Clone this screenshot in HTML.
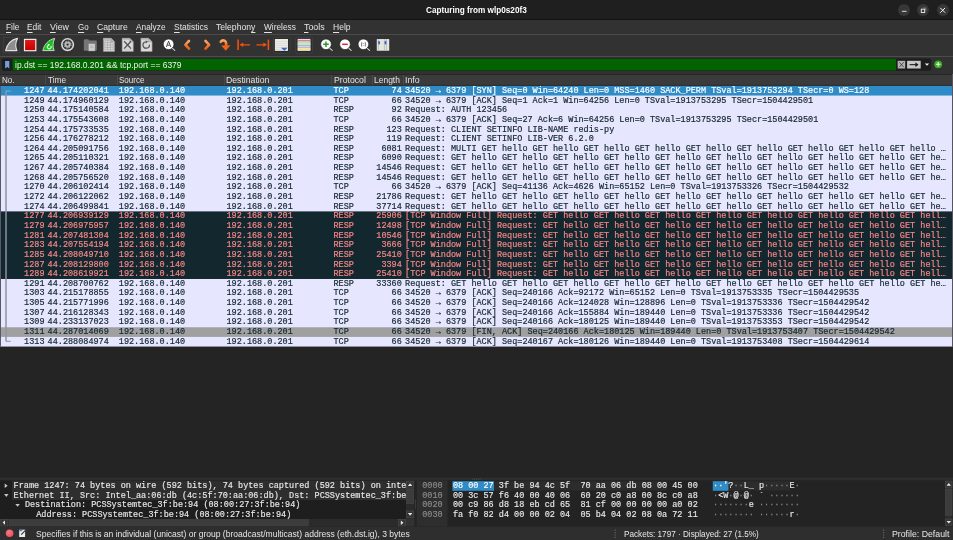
<!DOCTYPE html>
<html><head><meta charset="utf-8"><title>Capturing from wlp0s20f3</title>
<style>
html,body{margin:0;padding:0;}
body{width:953px;height:540px;overflow:hidden;position:relative;background:#313131;font-family:"Liberation Sans",sans-serif;color:#e6e6e6;}
.abs{position:absolute;}
.s{position:absolute;white-space:nowrap;line-height:11px;transform-origin:0 50%;display:block;}
.s u{text-decoration:underline;text-decoration-thickness:0.9px;text-underline-offset:1.5px;}
#title{left:0;top:0;width:953px;height:20px;background:#1f1f1f;border-bottom:1px solid #141414;box-sizing:border-box;}
.wb{position:absolute;top:4.1px;width:12.2px;height:12.2px;border-radius:50%;background:#373737;}
#menu{left:0;top:20px;width:953px;height:14.5px;background:#323232;border-bottom:1px solid #4a4a4a;box-sizing:border-box;}
#tool{left:0;top:34.5px;width:953px;height:22.5px;background:#323232;border-bottom:1px solid #4c4c4c;box-sizing:border-box;}
#filt{left:0;top:57px;width:953px;height:16.5px;background:#313131;}
#filt .fr{position:absolute;left:1.8px;top:1.6px;width:929.4px;height:12px;background:#1d1d1d;border-radius:2px;}
#filt .g{position:absolute;left:12.6px;top:1.8px;width:883.4px;height:11.6px;background:#016401;}
#hdr{left:0;top:73.6px;width:952px;height:12px;background:#3b3b3b;border-top:1px solid #262626;box-sizing:border-box;}
#hdr i{position:absolute;top:0.5px;width:1px;height:10.5px;background:#4a4a4a;}
#list{left:0;top:85.5px;width:953px;height:261px;background:#e7e6ff;}
.r{position:absolute;left:1px;width:951px;height:10px;color:#12272e;font-family:"Liberation Mono",monospace;font-size:8.5px;line-height:10px;white-space:pre;-webkit-text-stroke:0.18px currentColor;}
.r.sel{color:#fff;}
.r.bad{color:#f78787;}
.r.fin{color:#12272e;}
.c{position:absolute;top:0;}
.no{left:0;width:43.5px;text-align:right;}
.tm{left:46.6px;}
.sr{left:117.8px;}
.ds{left:225.5px;}
.pr{left:332.5px;}
.ln{left:340px;width:60.8px;text-align:right;}
.in{left:404.1px;}
#gap{left:0;top:346px;width:953px;height:181px;background:#242424;}
#bot{left:0;top:0;width:953px;height:540px;}
.m{font-family:"Liberation Mono",monospace;font-size:8.5px;line-height:10px;height:10px;white-space:pre;color:#e8e8e8;position:absolute;-webkit-text-stroke:0.15px currentColor;}
.dim{color:#8c8c8c;}
#stat{left:0;top:526.6px;width:953px;height:13.4px;background:#2f2f2f;}
</style></head><body><div id="root" style="position:absolute;left:0;top:0;width:953px;height:540px;will-change:transform;">
<div id="title" class="abs">
<div class="wb" style="left:898.1px"></div><div class="wb" style="left:917.3px"></div><div class="wb" style="left:936.6px"></div>
<svg class="abs" style="left:890px;top:0" width="63" height="20" viewBox="890 0 63 20">
<path d="M901.9 11.3 H906.5" stroke="#f0f0f0" stroke-width="0.9"/>
<rect x="921.3" y="9.2" width="3.4" height="3.3" fill="none" stroke="#f0f0f0" stroke-width="0.9"/>
<path d="M922.8 8 H925.9 V11" fill="none" stroke="#9a9a9a" stroke-width="0.6"/>
<path d="M940.3 7.9 L945.1 12.7 M945.1 7.9 L940.3 12.7" stroke="#f4f4f4" stroke-width="1"/>
</svg>
</div>
<span class="s" style="left:426px;top:4.6px;font-size:9.0px;transform:scaleX(0.9120);font-weight:bold;color:#ffffff;">Capturing from wlp0s20f3</span>
<div id="menu" class="abs"></div>
<span class="s" style="left:5.5px;top:22.3px;font-size:9.0px;transform:scaleX(0.9231);color:#e4e4e4;"><u>F</u>ile</span>
<span class="s" style="left:27.2px;top:22.3px;font-size:9.0px;transform:scaleX(0.9281);color:#e4e4e4;"><u>E</u>dit</span>
<span class="s" style="left:50.4px;top:22.3px;font-size:9.0px;transform:scaleX(0.9763);color:#e4e4e4;"><u>V</u>iew</span>
<span class="s" style="left:77.6px;top:22.3px;font-size:9.0px;transform:scaleX(0.8822);color:#e4e4e4;"><u>G</u>o</span>
<span class="s" style="left:96.5px;top:22.3px;font-size:9.0px;transform:scaleX(0.9584);color:#e4e4e4;"><u>C</u>apture</span>
<span class="s" style="left:135.5px;top:22.3px;font-size:9.0px;transform:scaleX(0.9210);color:#e4e4e4;"><u>A</u>nalyze</span>
<span class="s" style="left:173.8px;top:22.3px;font-size:9.0px;transform:scaleX(0.9440);color:#e4e4e4;"><u>S</u>tatistics</span>
<span class="s" style="left:216.4px;top:22.3px;font-size:9.0px;transform:scaleX(0.9599);color:#e4e4e4;">Telephon<u>y</u></span>
<span class="s" style="left:263.9px;top:22.3px;font-size:9.0px;transform:scaleX(0.9213);color:#e4e4e4;"><u>W</u>ireless</span>
<span class="s" style="left:303.7px;top:22.3px;font-size:9.0px;transform:scaleX(0.9850);color:#e4e4e4;"><u>T</u>ools</span>
<span class="s" style="left:332.5px;top:22.3px;font-size:9.0px;transform:scaleX(0.9505);color:#e4e4e4;"><u>H</u>elp</span>
<div id="tool" class="abs"></div>
<svg class="abs" style="left:0;top:34px" width="953" height="23" viewBox="0 34 953 23">
<defs>
<linearGradient id="og" x1="0" y1="0" x2="0" y2="1"><stop offset="0" stop-color="#f8a868"/><stop offset="1" stop-color="#ee5a10"/></linearGradient>
<linearGradient id="rg" x1="0" y1="0" x2="0" y2="1"><stop offset="0" stop-color="#e81818"/><stop offset="1" stop-color="#c20000"/></linearGradient>
</defs>
<!-- 1 start (disabled) -->
<rect x="3.3" y="37.3" width="16.2" height="15.6" fill="#313131" stroke="#464646" stroke-width="0.6"/>
<path d="M5.6 50.6 C7 44.6 11 39.8 17.5 38.4 C15.4 42.4 15.4 47 17 50.6 Z" fill="#8e8e8e" stroke="#e2e2e2" stroke-width="1.1" stroke-linejoin="round"/>
<!-- 2 stop -->
<rect x="24.5" y="39.4" width="11.3" height="11.3" fill="url(#rg)" stroke="#ececec" stroke-width="1.2"/>
<!-- 3 restart -->
<path d="M42.8 50.6 C44.2 44.6 48.2 39.8 54.7 38.4 C52.6 42.4 52.6 47 54.2 50.6 Z" fill="#12c412" stroke="#dcdcdc" stroke-width="0.9" stroke-linejoin="round"/>
<path d="M51 45.9 A2 2 0 1 1 47.6 45.6" fill="none" stroke="#f4fff4" stroke-width="1.1"/>
<path d="M47.6 43.8 L50.2 44.6 L48.2 46.6 Z" fill="#fff"/>
<!-- 4 options -->
<circle cx="67.6" cy="44.6" r="5.8" fill="none" stroke="#d8d8d8" stroke-width="1.6"/>
<circle cx="67.6" cy="44.6" r="3.55" fill="none" stroke="#b4b4b4" stroke-width="1" stroke-dasharray="1.5 1.29"/>
<circle cx="67.6" cy="44.6" r="2.15" fill="none" stroke="#b8b8b8" stroke-width="2"/>
<!-- 5 open (folder) -->
<path d="M83.8 40.2 q0 -1 1 -1 h3.4 l1 1.2 h6.6 q1 0 1 1 v8.4 q0 1 -1 1 h-11 q-1 0 -1 -1 Z" fill="#767676"/>
<rect x="88.6" y="43.8" width="6.4" height="7.2" fill="#cfcfcf" stroke="#8a8a8a" stroke-width="0.4"/>
<path d="M90 46 h3.4 M90 47.6 h3.4" stroke="#9a9a9a" stroke-width="0.5"/>
<!-- 6 save -->
<path d="M103.4 38.2 h7.6 l3.6 3.6 v9.7 h-11.2 Z" fill="#dadada" stroke="#909090" stroke-width="0.55"/><path d="M103.4 38.2 h7.6 l1.8 1.8 h-9.4 Z" fill="#b4b4b4" opacity="0.7"/>
<path d="M111 38.2 v3.6 h3.6" fill="#b8b8b8" stroke="#8a8a8a" stroke-width="0.4"/>
<path d="M104.8 42.6 h8.4 M104.8 45 h8.4 M104.8 47.4 h8.4 M104.8 49.8 h8.4 M104.8 40.4 v9.4 M107.6 40.4 v9.4 M110.4 40.4 v9.4 M113.2 42.6 v7.2 M104.8 40.4 h5.6" stroke="#9a9a9a" stroke-width="0.55" fill="none"/>
<!-- 7 close -->
<path d="M122.1 38.2 h7.6 l3.6 3.6 v9.7 h-11.2 Z" fill="#dadada" stroke="#909090" stroke-width="0.55"/><path d="M122.1 38.2 h7.6 l1.8 1.8 h-9.4 Z" fill="#b4b4b4" opacity="0.7"/>
<path d="M129.7 38.2 v3.6 h3.6" fill="#b8b8b8" stroke="#8a8a8a" stroke-width="0.4"/>
<path d="M124.2 41.2 L131 48.6 M131 41.2 L124.2 48.6" stroke="#555" stroke-width="1.4"/><path d="M124 49.9 h7.4" stroke="#b0b0b0" stroke-width="0.5"/>
<!-- 8 reload -->
<path d="M140.9 38.2 h7.6 l3.6 3.6 v9.7 h-11.2 Z" fill="#dadada" stroke="#909090" stroke-width="0.55"/><path d="M140.9 38.2 h7.6 l1.8 1.8 h-9.4 Z" fill="#b4b4b4" opacity="0.7"/>
<path d="M148.5 38.2 v3.6 h3.6" fill="#b8b8b8" stroke="#8a8a8a" stroke-width="0.4"/>
<path d="M149.4 44.6 A3.2 3.2 0 1 1 145.8 41.85" fill="none" stroke="#5c5c5c" stroke-width="1.3"/>
<path d="M145.6 40.2 L148.3 41.7 L145.8 43.4 Z" fill="#5c5c5c"/>
<!-- 9 find -->
<path d="M171.6 47.6 L174.8 50.4" stroke="#d0d0d0" stroke-width="1.1" stroke-linecap="round"/>
<circle cx="168.6" cy="44.3" r="5.3" fill="#fff" stroke="#1c1c1c" stroke-width="0.6"/>
<path d="M166.4 47 L168.6 41.2 L170.8 47 M167.2 45.2 H170" fill="none" stroke="#3a3a3a" stroke-width="0.9"/>
<!-- 10 back -->
<path d="M189 40.9 L185.4 44.8 L189 48.7" fill="none" stroke="url(#og)" stroke-width="2.6" stroke-linecap="round" stroke-linejoin="round"/>
<!-- 11 fwd -->
<path d="M205.5 40.9 L209.1 44.8 L205.5 48.7" fill="none" stroke="url(#og)" stroke-width="2.6" stroke-linecap="round" stroke-linejoin="round"/>
<!-- 12 goto -->
<path d="M220.8 41.8 C222.6 39.4 227 39.6 226 46.2" fill="none" stroke="url(#og)" stroke-width="2.7" stroke-linecap="round"/>
<path d="M221.2 45.6 L230.4 45.2 L225.8 50.8 Z" fill="#f0621a"/>
<!-- 13 first -->
<path d="M238.1 39.6 V50" stroke="#f2500e" stroke-width="1.6"/>
<path d="M239.4 44.8 L243.2 42.6 V44.2 H250 V45.4 H243.2 V47 Z" fill="#f2500e"/>
<!-- 14 last -->
<path d="M268.4 39.6 V50" stroke="#f2500e" stroke-width="1.6"/>
<path d="M267.1 44.8 L263.3 42.6 V44.2 H256.4 V45.4 H263.3 V47 Z" fill="#f2500e"/>
<!-- 15 autoscroll (checked) -->
<rect x="273.2" y="37.3" width="16.8" height="15.8" rx="1.2" fill="#2b2b2b" stroke="#484848" stroke-width="0.7"/>
<rect x="274.9" y="39" width="13.1" height="11.9" fill="#ecece8"/>
<path d="M274.9 41.4 h13.1 M274.9 43.4 h13.1 M274.9 45.4 h13.1 M274.9 47.4 h13.1 M274.9 49.4 h13.1" stroke="#c8c8c4" stroke-width="0.45"/>
<path d="M281 47.7 H287.6 L284.3 50.7 Z" fill="#2d66c8"/>
<!-- 16 colorize (checked) -->
<rect x="295.8" y="37.3" width="16.6" height="15.8" rx="1.2" fill="#2b2b2b" stroke="#484848" stroke-width="0.7"/>
<rect x="297.7" y="38.9" width="12.7" height="11.9" fill="#f4f4f4"/>
<rect x="297.7" y="39.8" width="12.7" height="1.1" fill="#ee6a6a"/>
<rect x="297.7" y="41.5" width="12.7" height="0.9" fill="#7a9ee0"/>
<rect x="297.7" y="42.9" width="12.7" height="2" fill="#c4ec9a"/>
<rect x="297.7" y="45.3" width="12.7" height="0.8" fill="#7a9ee0"/>
<rect x="297.7" y="46.7" width="12.7" height="1" fill="#b09acc"/>
<rect x="297.7" y="48.2" width="12.7" height="2.2" fill="#f0e29a"/>
<!-- 17 zoom in -->
<path d="M329 47.6 L332.2 50.4" stroke="#d0d0d0" stroke-width="1.1" stroke-linecap="round"/>
<circle cx="326" cy="44.3" r="5.3" fill="#fff" stroke="#1c1c1c" stroke-width="0.6"/>
<path d="M323.2 44.3 H328.8 M326 41.5 V47.1" stroke="#2a9a2a" stroke-width="1.5"/>
<!-- 18 zoom out -->
<path d="M348 47.6 L351.2 50.4" stroke="#d0d0d0" stroke-width="1.1" stroke-linecap="round"/>
<circle cx="345" cy="44.3" r="5.3" fill="#fff" stroke="#1c1c1c" stroke-width="0.6"/>
<path d="M342.2 44.3 H347.8" stroke="#d02848" stroke-width="1.5"/>
<!-- 19 zoom 1:1 -->
<path d="M366.4 47.6 L369.6 50.4" stroke="#d0d0d0" stroke-width="1.1" stroke-linecap="round"/>
<circle cx="363.4" cy="44.3" r="5.3" fill="#fff" stroke="#1c1c1c" stroke-width="0.6"/>
<path d="M361.6 42.2 V46.6 M365.4 42.2 V46.6" stroke="#8c8c8c" stroke-width="1.2"/>
<path d="M363.5 43.2 V43.9 M363.5 44.9 V45.6" stroke="#8c8c8c" stroke-width="0.8"/>
<!-- 20 resize columns -->
<rect x="376.8" y="39.1" width="12.4" height="11.6" fill="#f0f0ea"/>
<path d="M376.8 41 h12.4 M376.8 43 h12.4 M376.8 45 h12.4 M376.8 47 h12.4 M376.8 49 h12.4" stroke="#c4c4be" stroke-width="0.5"/>
<path d="M378.3 39.1 v11.6 M384.4 39.1 v11.6 M386.4 39.1 v11.6" stroke="#a8a8a2" stroke-width="0.6"/>
<path d="M378.3 40.8 a1.9 1.9 0 0 1 0 3.8 Z M386.3 40.8 a1.9 1.9 0 0 0 0 3.8 Z" fill="#2d66c8"/>
</svg>

<div id="filt" class="abs">
<svg class="abs" style="left:0;top:0" width="953" height="17" viewBox="0 57 953 17">
<rect x="1.8" y="58.6" width="929.4" height="12.1" rx="1.6" fill="#1d1d1d"/><rect x="12.6" y="58.9" width="883.4" height="11.5" fill="#016401"/>
<path d="M5.1 61 H9.3 V68.6 L7.2 66.9 L5.1 68.6 Z" fill="#6f9fdc"/>
<rect x="897.7" y="60.8" width="7.5" height="7.7" fill="#b4b4b4"/>
<path d="M899.2 62.2 L903.8 67.2 M903.8 62.2 L899.2 67.2" stroke="#2a2a2a" stroke-width="0.7"/>
<rect x="907.1" y="60.8" width="13.6" height="7.7" fill="#c9c9c9"/>
<path d="M909.6 64.65 H916.2" stroke="#1e1e1e" stroke-width="1.1"/>
<path d="M915.4 62.2 L918.6 64.65 L915.4 67.1 Z" fill="#1e1e1e"/>
<path d="M924.8 63.6 H929.2 L927 65.8 Z" fill="#f0f0f0"/>
<circle cx="938.2" cy="64.3" r="3.9" fill="#3aae22"/>
<path d="M935.9 64.3 H940.5 M938.2 62 V66.6" stroke="#f4fff0" stroke-width="1.1"/>
</svg>
</div>
<span class="s" style="left:14.9px;top:60.0px;font-size:9.0px;transform:scaleX(0.9399);color:#eef4e6;">ip.dst == 192.168.0.201 &amp;&amp; tcp.port == 6379</span>
<div id="hdr" class="abs"><i style="left:44.7px"></i><i style="left:116.6px"></i><i style="left:223.7px"></i><i style="left:331px"></i><i style="left:372px"></i><i style="left:402.8px"></i></div>
<span class="s" style="left:1.9px;top:74.6px;font-size:9.0px;transform:scaleX(0.8990);color:#e2e2e2;">No.</span>
<span class="s" style="left:47.6px;top:74.6px;font-size:9.0px;transform:scaleX(0.9201);color:#e2e2e2;">Time</span>
<span class="s" style="left:118.9px;top:74.6px;font-size:9.0px;transform:scaleX(0.8938);color:#e2e2e2;">Source</span>
<span class="s" style="left:226.2px;top:74.6px;font-size:9.0px;transform:scaleX(0.9638);color:#e2e2e2;">Destination</span>
<span class="s" style="left:333.5px;top:74.6px;font-size:9.0px;transform:scaleX(0.9658);color:#e2e2e2;">Protocol</span>
<span class="s" style="left:374.1px;top:74.6px;font-size:9.0px;transform:scaleX(0.9407);color:#e2e2e2;">Length</span>
<span class="s" style="left:404.7px;top:74.6px;font-size:9.0px;transform:scaleX(0.9790);color:#e2e2e2;">Info</span>
<div id="gap" class="abs"></div>
<svg class="abs" style="left:0;top:80px" width="953" height="270" viewBox="0 80 953 270"><rect x="0" y="85.90" width="953" height="260.66" fill="#e7e6ff"/><rect x="0" y="84.90" width="952" height="1" fill="#2a2524"/><rect x="1" y="85.90" width="951" height="9.65" fill="#308cc6"/><rect x="1" y="211.40" width="951" height="67.58" fill="#12272e"/><rect x="1" y="327.25" width="951" height="9.65" fill="#a0a0a0"/><rect x="0" y="85.90" width="0.9" height="260.66" fill="#4a4a55"/><path d="M6 91 V341.3" fill="none" stroke="#9292a4" stroke-width="1.5"/><path d="M6 91 H10.7" stroke="#8fb4d4" stroke-width="0.9"/><path d="M6 341.3 H10.8" stroke="#8a8a9c" stroke-width="0.9"/></svg>
<div class="r sel" style="top:86px"><span class="c no">1247</span><span class="c tm">44.174202041</span><span class="c sr">192.168.0.140</span><span class="c ds">192.168.0.201</span><span class="c pr">TCP</span><span class="c ln">74</span><span class="c in">34520 → 6379 [SYN] Seq=0 Win=64240 Len=0 MSS=1460 SACK_PERM TSval=1913753294 TSecr=0 WS=128</span></div>
<div class="r " style="top:96px"><span class="c no">1249</span><span class="c tm">44.174960129</span><span class="c sr">192.168.0.140</span><span class="c ds">192.168.0.201</span><span class="c pr">TCP</span><span class="c ln">66</span><span class="c in">34520 → 6379 [ACK] Seq=1 Ack=1 Win=64256 Len=0 TSval=1913753295 TSecr=1504429501</span></div>
<div class="r " style="top:105px"><span class="c no">1250</span><span class="c tm">44.175140584</span><span class="c sr">192.168.0.140</span><span class="c ds">192.168.0.201</span><span class="c pr">RESP</span><span class="c ln">92</span><span class="c in">Request: AUTH 123456</span></div>
<div class="r " style="top:115px"><span class="c no">1253</span><span class="c tm">44.175543608</span><span class="c sr">192.168.0.140</span><span class="c ds">192.168.0.201</span><span class="c pr">TCP</span><span class="c ln">66</span><span class="c in">34520 → 6379 [ACK] Seq=27 Ack=6 Win=64256 Len=0 TSval=1913753295 TSecr=1504429501</span></div>
<div class="r " style="top:125px"><span class="c no">1254</span><span class="c tm">44.175733535</span><span class="c sr">192.168.0.140</span><span class="c ds">192.168.0.201</span><span class="c pr">RESP</span><span class="c ln">123</span><span class="c in">Request: CLIENT SETINFO LIB-NAME redis-py</span></div>
<div class="r " style="top:134px"><span class="c no">1256</span><span class="c tm">44.176278212</span><span class="c sr">192.168.0.140</span><span class="c ds">192.168.0.201</span><span class="c pr">RESP</span><span class="c ln">119</span><span class="c in">Request: CLIENT SETINFO LIB-VER 6.2.0</span></div>
<div class="r " style="top:144px"><span class="c no">1264</span><span class="c tm">44.205091756</span><span class="c sr">192.168.0.140</span><span class="c ds">192.168.0.201</span><span class="c pr">RESP</span><span class="c ln">6081</span><span class="c in">Request: MULTI GET hello GET hello GET hello GET hello GET hello GET hello GET hello GET hello GET hello …</span></div>
<div class="r " style="top:153px"><span class="c no">1265</span><span class="c tm">44.205110321</span><span class="c sr">192.168.0.140</span><span class="c ds">192.168.0.201</span><span class="c pr">RESP</span><span class="c ln">6090</span><span class="c in">Request: GET hello GET hello GET hello GET hello GET hello GET hello GET hello GET hello GET hello GET he…</span></div>
<div class="r " style="top:163px"><span class="c no">1267</span><span class="c tm">44.205740384</span><span class="c sr">192.168.0.140</span><span class="c ds">192.168.0.201</span><span class="c pr">RESP</span><span class="c ln">14546</span><span class="c in">Request: GET hello GET hello GET hello GET hello GET hello GET hello GET hello GET hello GET hello GET he…</span></div>
<div class="r " style="top:173px"><span class="c no">1268</span><span class="c tm">44.205756520</span><span class="c sr">192.168.0.140</span><span class="c ds">192.168.0.201</span><span class="c pr">RESP</span><span class="c ln">14546</span><span class="c in">Request: GET hello GET hello GET hello GET hello GET hello GET hello GET hello GET hello GET hello GET he…</span></div>
<div class="r " style="top:182px"><span class="c no">1270</span><span class="c tm">44.206102414</span><span class="c sr">192.168.0.140</span><span class="c ds">192.168.0.201</span><span class="c pr">TCP</span><span class="c ln">66</span><span class="c in">34520 → 6379 [ACK] Seq=41136 Ack=4626 Win=65152 Len=0 TSval=1913753326 TSecr=1504429532</span></div>
<div class="r " style="top:192px"><span class="c no">1272</span><span class="c tm">44.206122062</span><span class="c sr">192.168.0.140</span><span class="c ds">192.168.0.201</span><span class="c pr">RESP</span><span class="c ln">21786</span><span class="c in">Request: GET hello GET hello GET hello GET hello GET hello GET hello GET hello GET hello GET hello GET he…</span></div>
<div class="r " style="top:202px"><span class="c no">1274</span><span class="c tm">44.206499841</span><span class="c sr">192.168.0.140</span><span class="c ds">192.168.0.201</span><span class="c pr">RESP</span><span class="c ln">37714</span><span class="c in">Request: GET hello GET hello GET hello GET hello GET hello GET hello GET hello GET hello GET hello GET he…</span></div>
<div class="r bad" style="top:211px"><span class="c no">1277</span><span class="c tm">44.206939129</span><span class="c sr">192.168.0.140</span><span class="c ds">192.168.0.201</span><span class="c pr">RESP</span><span class="c ln">25906</span><span class="c in">[TCP Window Full] Request: GET hello GET hello GET hello GET hello GET hello GET hello GET hello GET hell…</span></div>
<div class="r bad" style="top:221px"><span class="c no">1279</span><span class="c tm">44.206975957</span><span class="c sr">192.168.0.140</span><span class="c ds">192.168.0.201</span><span class="c pr">RESP</span><span class="c ln">12498</span><span class="c in">[TCP Window Full] Request: GET hello GET hello GET hello GET hello GET hello GET hello GET hello GET hell…</span></div>
<div class="r bad" style="top:231px"><span class="c no">1281</span><span class="c tm">44.207481304</span><span class="c sr">192.168.0.140</span><span class="c ds">192.168.0.201</span><span class="c pr">RESP</span><span class="c ln">10546</span><span class="c in">[TCP Window Full] Request: GET hello GET hello GET hello GET hello GET hello GET hello GET hello GET hell…</span></div>
<div class="r bad" style="top:240px"><span class="c no">1283</span><span class="c tm">44.207554194</span><span class="c sr">192.168.0.140</span><span class="c ds">192.168.0.201</span><span class="c pr">RESP</span><span class="c ln">3666</span><span class="c in">[TCP Window Full] Request: GET hello GET hello GET hello GET hello GET hello GET hello GET hello GET hell…</span></div>
<div class="r bad" style="top:250px"><span class="c no">1285</span><span class="c tm">44.208049710</span><span class="c sr">192.168.0.140</span><span class="c ds">192.168.0.201</span><span class="c pr">RESP</span><span class="c ln">25410</span><span class="c in">[TCP Window Full] Request: GET hello GET hello GET hello GET hello GET hello GET hello GET hello GET hell…</span></div>
<div class="r bad" style="top:260px"><span class="c no">1287</span><span class="c tm">44.208129800</span><span class="c sr">192.168.0.140</span><span class="c ds">192.168.0.201</span><span class="c pr">RESP</span><span class="c ln">3394</span><span class="c in">[TCP Window Full] Request: GET hello GET hello GET hello GET hello GET hello GET hello GET hello GET hell…</span></div>
<div class="r bad" style="top:269px"><span class="c no">1289</span><span class="c tm">44.208619921</span><span class="c sr">192.168.0.140</span><span class="c ds">192.168.0.201</span><span class="c pr">RESP</span><span class="c ln">25410</span><span class="c in">[TCP Window Full] Request: GET hello GET hello GET hello GET hello GET hello GET hello GET hello GET hell…</span></div>
<div class="r " style="top:279px"><span class="c no">1291</span><span class="c tm">44.208700762</span><span class="c sr">192.168.0.140</span><span class="c ds">192.168.0.201</span><span class="c pr">RESP</span><span class="c ln">33360</span><span class="c in">Request: GET hello GET hello GET hello GET hello GET hello GET hello GET hello GET hello GET hello GET he…</span></div>
<div class="r " style="top:288px"><span class="c no">1303</span><span class="c tm">44.215178855</span><span class="c sr">192.168.0.140</span><span class="c ds">192.168.0.201</span><span class="c pr">TCP</span><span class="c ln">66</span><span class="c in">34520 → 6379 [ACK] Seq=240166 Ack=92172 Win=65152 Len=0 TSval=1913753335 TSecr=1504429535</span></div>
<div class="r " style="top:298px"><span class="c no">1305</span><span class="c tm">44.215771996</span><span class="c sr">192.168.0.140</span><span class="c ds">192.168.0.201</span><span class="c pr">TCP</span><span class="c ln">66</span><span class="c in">34520 → 6379 [ACK] Seq=240166 Ack=124028 Win=128896 Len=0 TSval=1913753336 TSecr=1504429542</span></div>
<div class="r " style="top:308px"><span class="c no">1307</span><span class="c tm">44.216128343</span><span class="c sr">192.168.0.140</span><span class="c ds">192.168.0.201</span><span class="c pr">TCP</span><span class="c ln">66</span><span class="c in">34520 → 6379 [ACK] Seq=240166 Ack=155884 Win=189440 Len=0 TSval=1913753336 TSecr=1504429542</span></div>
<div class="r " style="top:317px"><span class="c no">1309</span><span class="c tm">44.233137023</span><span class="c sr">192.168.0.140</span><span class="c ds">192.168.0.201</span><span class="c pr">TCP</span><span class="c ln">66</span><span class="c in">34520 → 6379 [ACK] Seq=240166 Ack=180125 Win=189440 Len=0 TSval=1913753353 TSecr=1504429542</span></div>
<div class="r fin" style="top:327px"><span class="c no">1311</span><span class="c tm">44.287014069</span><span class="c sr">192.168.0.140</span><span class="c ds">192.168.0.201</span><span class="c pr">TCP</span><span class="c ln">66</span><span class="c in">34520 → 6379 [FIN, ACK] Seq=240166 Ack=180125 Win=189440 Len=0 TSval=1913753407 TSecr=1504429542</span></div>
<div class="r " style="top:337px"><span class="c no">1313</span><span class="c tm">44.288084974</span><span class="c sr">192.168.0.140</span><span class="c ds">192.168.0.201</span><span class="c pr">TCP</span><span class="c ln">66</span><span class="c in">34520 → 6379 [ACK] Seq=240167 Ack=180126 Win=189440 Len=0 TSval=1913753408 TSecr=1504429614</span></div>
<div class="abs" style="left:952px;top:73.6px;width:1px;height:273px;background:#55555f"></div>
<div id="bot" class="abs">
<svg class="abs" style="left:0;top:470px" width="953" height="70" viewBox="0 470 953 70">
<rect x="0" y="477.6" width="953" height="3" fill="#2e2e2e"/><path d="M472.4 479 H481" stroke="#606060" stroke-width="0.8" stroke-dasharray="0.9 0.9"/><rect x="0" y="480.5" width="406" height="19.5" fill="#1e1e1e"/><rect x="11.9" y="480.7" width="394.1" height="19.3" fill="#2e2e2e"/>
<rect x="0" y="500" width="406" height="19" fill="#1e1e1e"/>
<rect x="406" y="480.5" width="8.2" height="38.5" fill="#2b2b2b"/>
<rect x="406.4" y="481.2" width="7.4" height="6.8" fill="#343434" stroke="#4e4e4e" stroke-width="0.6"/>
<rect x="406.4" y="489" width="7.4" height="14.6" fill="#3c3c3c" stroke="#4a4a4a" stroke-width="0.5"/>
<rect x="406.4" y="511" width="7.4" height="6.8" fill="#343434" stroke="#4e4e4e" stroke-width="0.6"/>
<path d="M407.9 486 L410.1 483.3 L412.3 486 Z" fill="#e8e8e8"/>
<path d="M407.9 513.1 L410.1 515.8 L412.3 513.1 Z" fill="#e8e8e8"/>
<rect x="0" y="519" width="414.2" height="7.3" fill="#2b2b2b"/>
<rect x="0.9" y="519.5" width="7.0" height="6.5" fill="#343434" stroke="#4e4e4e" stroke-width="0.6"/>
<rect x="9.3" y="519.5" width="299" height="6.5" fill="#3c3c3c" stroke="#474747" stroke-width="0.5"/>
<rect x="398.5" y="519.5" width="7.1" height="6.5" fill="#343434" stroke="#4e4e4e" stroke-width="0.6"/>
<rect x="406" y="519" width="8.2" height="7.3" fill="#323232"/>
<path d="M5 520.5 L2.6 522.6 L5 524.7 Z" fill="#e8e8e8"/>
<path d="M400.8 520.5 L403.5 522.7 L400.8 524.9 Z" fill="#e8e8e8"/>
<path d="M415.5 500 V509.4" stroke="#5a5a5a" stroke-width="0.9" stroke-dasharray="0.9 0.9"/>
<rect x="416.8" y="480.5" width="536.2" height="45.7" fill="#232323"/>
<rect x="416.8" y="480.5" width="30.8" height="45.7" fill="#2e2e2e"/>
<rect x="452.4" y="481.2" width="214.6" height="9.4" fill="#2c2c2c"/>
<rect x="712.8" y="481.2" width="76.8" height="9.4" fill="#2c2c2c"/>
<rect x="452.4" y="481.2" width="41.6" height="9.6" fill="#308cc6"/>
<rect x="712.8" y="481.2" width="15.6" height="9.6" fill="#308cc6"/>
<rect x="945.2" y="480.5" width="7.2" height="45.7" fill="#2b2b2b"/>
<rect x="945.5" y="481.1" width="6.5" height="6.7" fill="#343434" stroke="#4e4e4e" stroke-width="0.6"/>
<rect x="945.5" y="489" width="6.5" height="26.4" fill="#3c3c3c" stroke="#4a4a4a" stroke-width="0.5"/>
<rect x="945.5" y="519" width="6.5" height="6.5" fill="#343434" stroke="#4e4e4e" stroke-width="0.6"/>
<path d="M946.6 485.8 L948.8 483.1 L951 485.8 Z" fill="#e8e8e8"/>
<path d="M946.6 520.9 L948.8 523.6 L951 520.9 Z" fill="#e8e8e8"/>
<path d="M4.7 483.6 L7.7 485.8 L4.7 488 Z" fill="#c4c4c4"/>
<path d="M4.1 493.9 H8.5 L6.3 496.9 Z" fill="#c4c4c4"/>
<path d="M15.3 504 H19.8 L17.55 506.8 Z" fill="#c4c4c4"/>
<rect x="0" y="526.6" width="953" height="13.4" fill="#2e2e2e"/>
<defs><radialGradient id="rc" cx="0.4" cy="0.35" r="0.7"><stop offset="0" stop-color="#f8787e"/><stop offset="1" stop-color="#ec5060"/></radialGradient></defs>
<circle cx="9.6" cy="533.3" r="3.8" fill="url(#rc)"/>
<rect x="19.2" y="529.7" width="5.9" height="7.3" fill="#ececec"/>
<rect x="19.4" y="529.9" width="2.8" height="1.3" fill="#2a8ae8"/>
<path d="M26.4 529.3 L21.2 534.6" stroke="#3a3a3a" stroke-width="1.2"/>
<path d="M615.1 529.6 V538.6 M883.6 529.6 V538.6" stroke="#6a6a6a" stroke-width="1.1" stroke-dasharray="1.2 1.2"/>
</svg>
<div class="m" style="left:13.6px;top:481px">Frame 1247: 74 bytes on wire (592 bits), 74 bytes captured (592 bits) on inte</div>
<div class="m" style="left:13.6px;top:491px">Ethernet II, Src: Intel_aa:06:db (4c:5f:70:aa:06:db), Dst: PCSSystemtec_3f:be</div>
<div class="m" style="left:24.9px;top:500px">Destination: PCSSystemtec_3f:be:94 (08:00:27:3f:be:94)</div>
<div class="m" style="left:36.2px;top:510px">Address: PCSSystemtec_3f:be:94 (08:00:27:3f:be:94)</div>
<div class="m dim" style="left:422.2px;top:481px">0000</div>
<div class="m" style="left:452.9px;top:481px"><span style="color:#fff">08 00 27</span> 3f be 94 4c 5f  70 aa 06 db 08 00 45 00   <span style="color:#fff">··'</span>?<span class="dim">··</span>L_ p<span class="dim">·····</span>E<span class="dim">·</span></div>
<div class="m dim" style="left:422.2px;top:491px">0010</div>
<div class="m" style="left:452.9px;top:491px">00 3c 57 f6 40 00 40 06  60 20 c0 a8 00 8c c0 a8   <span class="dim">·</span>&lt;W<span class="dim">·</span>@<span class="dim">·</span>@<span class="dim">·</span> ` <span class="dim">······</span></div>
<div class="m dim" style="left:422.2px;top:500px">0020</div>
<div class="m" style="left:452.9px;top:500px">00 c9 86 d8 18 eb cd 65  81 cf 00 00 00 00 a0 02   <span class="dim">·······</span>e <span class="dim">········</span></div>
<div class="m dim" style="left:422.2px;top:510px">0030</div>
<div class="m" style="left:452.9px;top:510px">fa f0 82 d4 00 00 02 04  05 b4 04 02 08 0a 72 11   <span class="dim">········ ······</span>r<span class="dim">·</span></div>

</div>

<span class="s" style="left:36.3px;top:529.2px;font-size:9.0px;transform:scaleX(0.9480);color:#e6e6e6;">Specifies if this is an individual (unicast) or group (broadcast/multicast) address (eth.dst.ig), 3 bytes</span>
<span class="s" style="left:623.6px;top:529.2px;font-size:9.0px;transform:scaleX(0.9066);color:#e6e6e6;">Packets: 1797 · Displayed: 27 (1.5%)</span>
<span class="s" style="left:892.2px;top:529.2px;font-size:9.0px;transform:scaleX(0.9724);color:#e6e6e6;">Profile: Default</span>
</div></body></html>
